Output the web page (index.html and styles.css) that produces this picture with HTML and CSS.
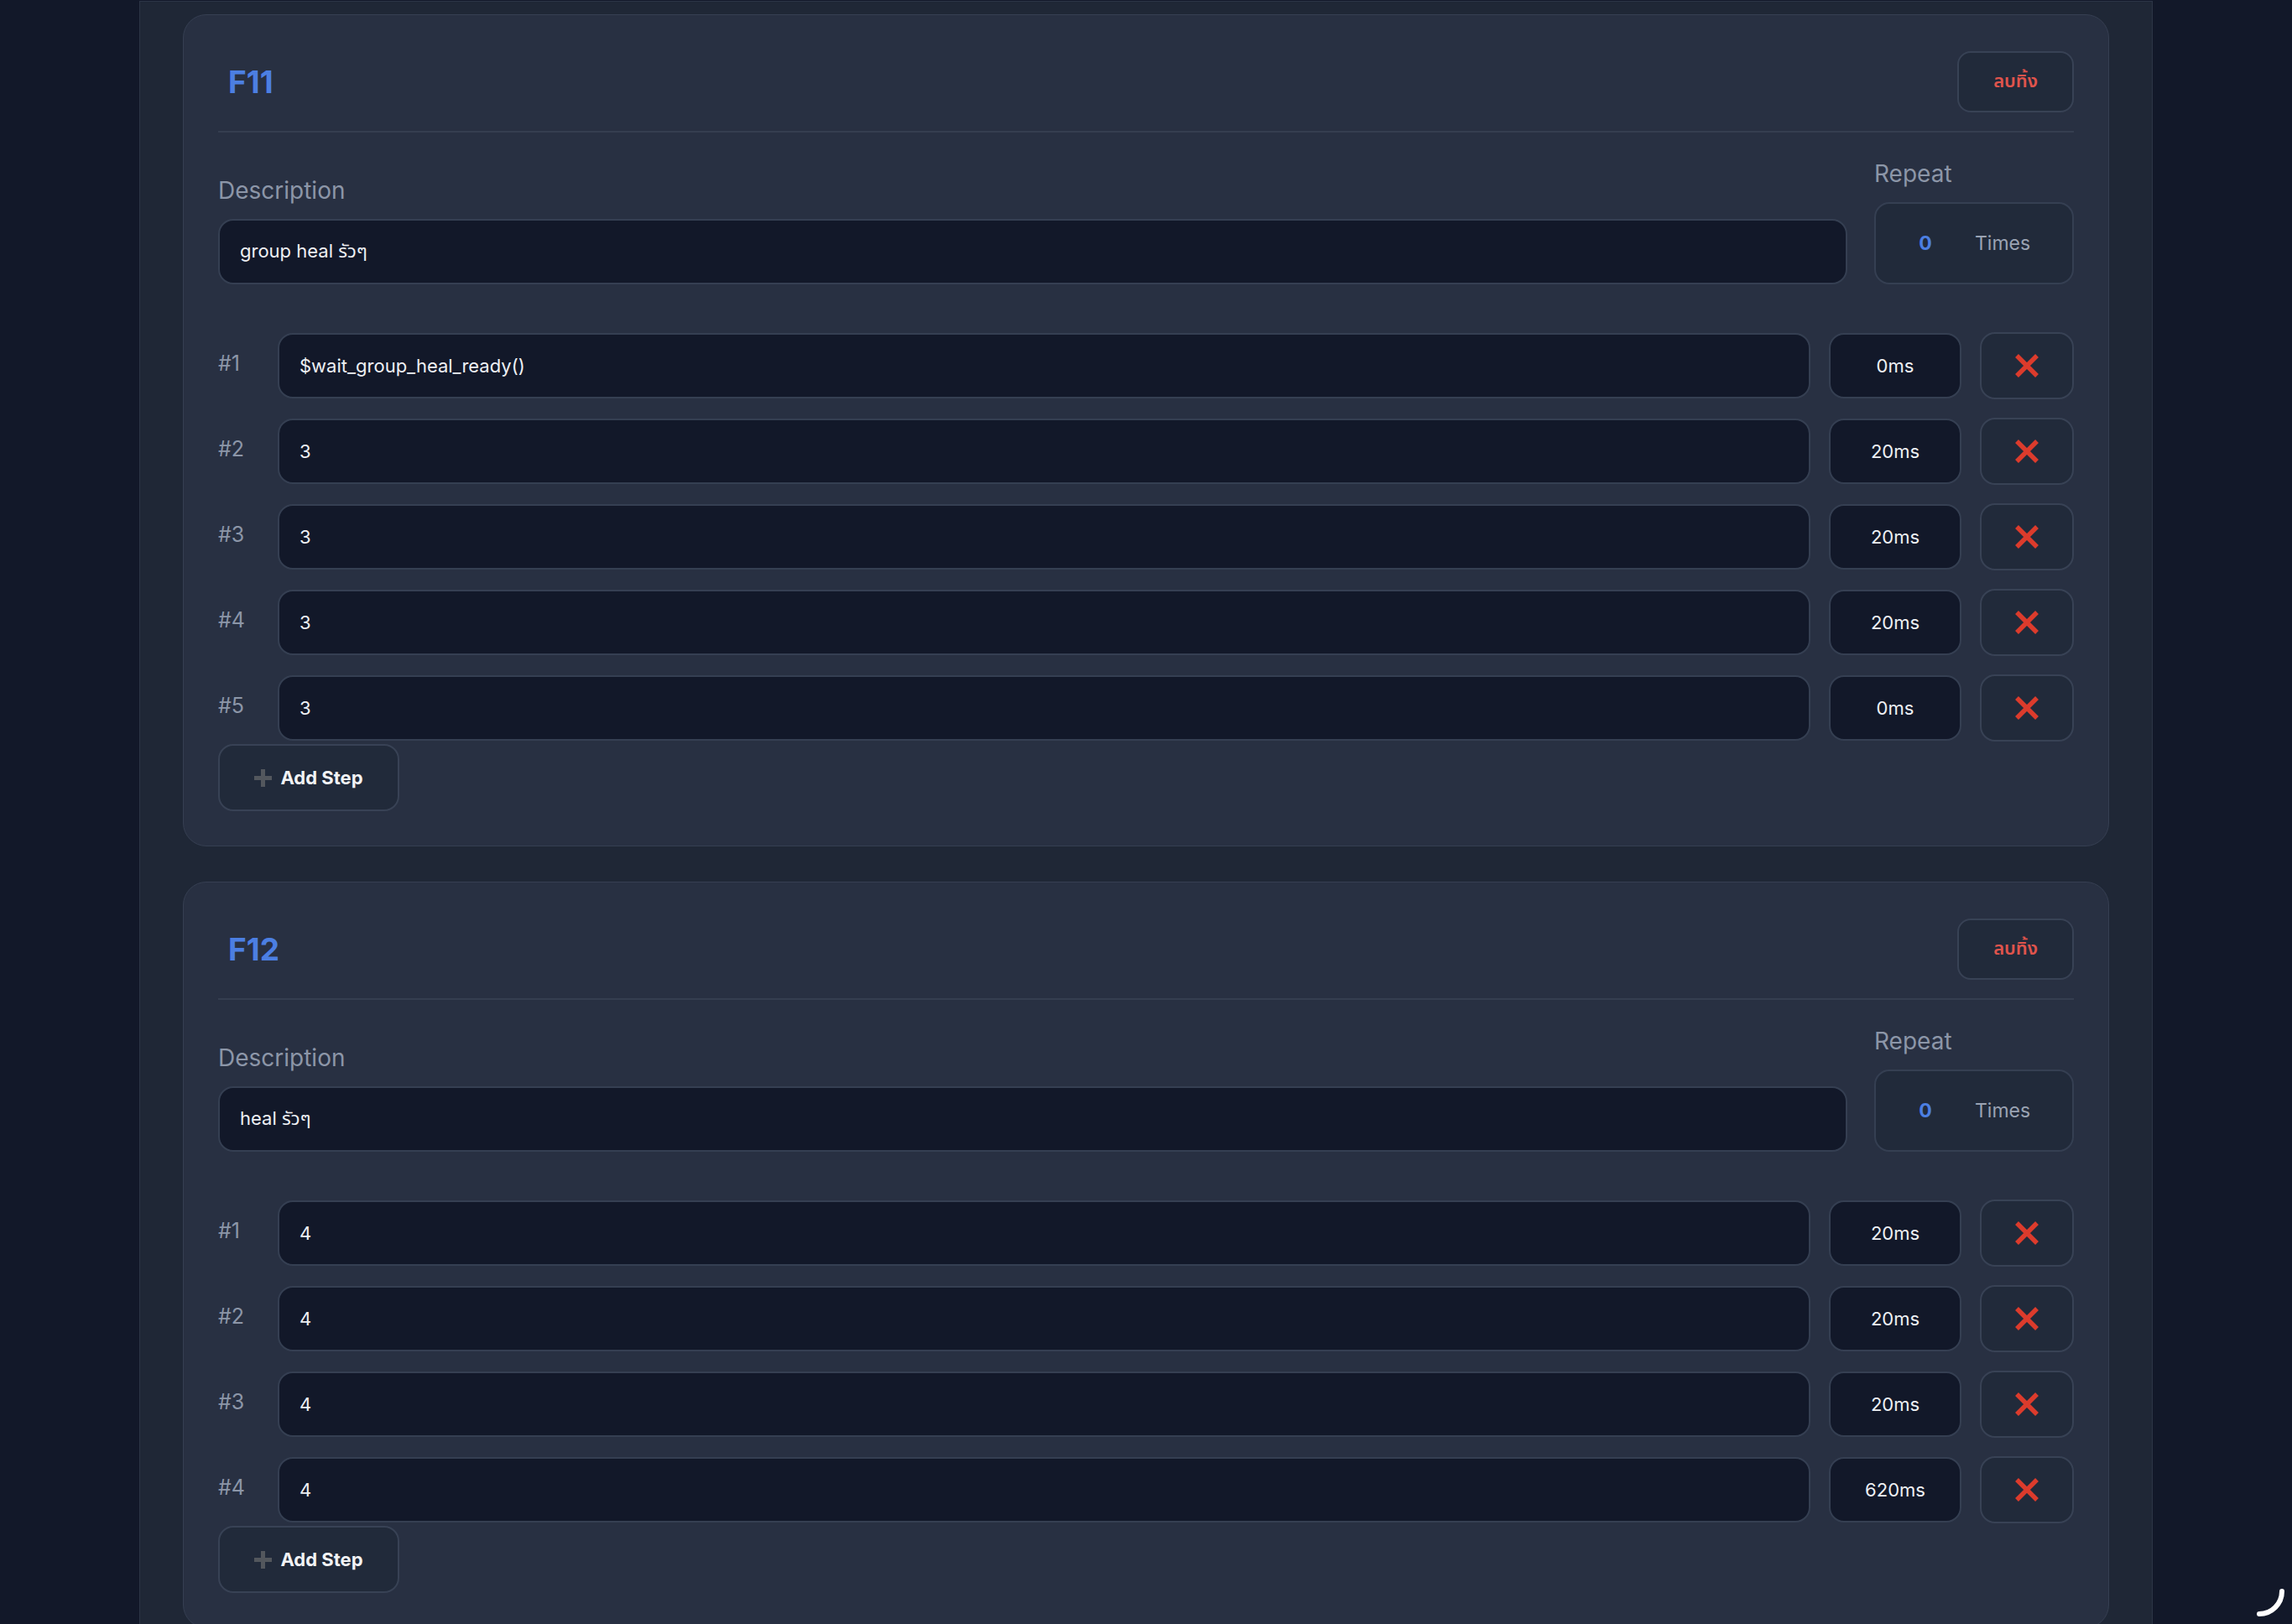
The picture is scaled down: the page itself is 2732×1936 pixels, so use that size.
FILE: index.html
```html
<!DOCTYPE html>
<html lang="th">
<head>
  <meta charset="UTF-8" />
  <title>Macro Editor</title>
  <meta name="viewport" content="width=device-width, initial-scale=1" />
  <link rel="stylesheet" href="styles.css">
</head>
<body>

<div class="wrap">

  <section class="macro">
    <div class="macro-head">
      <h2 class="macro-key">F11</h2>
      <button class="btn-remove">ลบทิ้ง</button>
    </div>
    <div class="meta">
      <div class="field desc">
        <label>Description</label>
        <input class="text-in" type="text" value="group heal รัวๆ">
      </div>
      <div class="field repeat">
        <label>Repeat</label>
        <div class="repeat-box">
          <input class="repeat-num" type="text" value="0">
          <span class="repeat-unit">Times</span>
        </div>
      </div>
    </div>
    <div class="steps">
      <div class="step">
        <span class="step-no">#1</span>
        <input class="text-in cmd" type="text" value="$wait_group_heal_ready()">
        <input class="text-in delay" type="text" value="0ms">
        <button class="btn-x"><svg width="28" height="28" viewBox="0 0 28 28"><path d="M2 2 L26 26 M26 2 L2 26" /></svg></button>
      </div>
      <div class="step">
        <span class="step-no">#2</span>
        <input class="text-in cmd" type="text" value="3">
        <input class="text-in delay" type="text" value="20ms">
        <button class="btn-x"><svg width="28" height="28" viewBox="0 0 28 28"><path d="M2 2 L26 26 M26 2 L2 26" /></svg></button>
      </div>
      <div class="step">
        <span class="step-no">#3</span>
        <input class="text-in cmd" type="text" value="3">
        <input class="text-in delay" type="text" value="20ms">
        <button class="btn-x"><svg width="28" height="28" viewBox="0 0 28 28"><path d="M2 2 L26 26 M26 2 L2 26" /></svg></button>
      </div>
      <div class="step">
        <span class="step-no">#4</span>
        <input class="text-in cmd" type="text" value="3">
        <input class="text-in delay" type="text" value="20ms">
        <button class="btn-x"><svg width="28" height="28" viewBox="0 0 28 28"><path d="M2 2 L26 26 M26 2 L2 26" /></svg></button>
      </div>
      <div class="step">
        <span class="step-no">#5</span>
        <input class="text-in cmd" type="text" value="3">
        <input class="text-in delay" type="text" value="0ms">
        <button class="btn-x"><svg width="28" height="28" viewBox="0 0 28 28"><path d="M2 2 L26 26 M26 2 L2 26" /></svg></button>
      </div>
    </div>
    <button class="btn-add"><svg width="21" height="21" viewBox="0 0 21 21"><path d="M10.5 0 V21 M0 10.5 H21" /></svg>Add Step</button>
  </section>

  <section class="macro">
    <div class="macro-head">
      <h2 class="macro-key">F12</h2>
      <button class="btn-remove">ลบทิ้ง</button>
    </div>
    <div class="meta">
      <div class="field desc">
        <label>Description</label>
        <input class="text-in" type="text" value="heal รัวๆ">
      </div>
      <div class="field repeat">
        <label>Repeat</label>
        <div class="repeat-box">
          <input class="repeat-num" type="text" value="0">
          <span class="repeat-unit">Times</span>
        </div>
      </div>
    </div>
    <div class="steps">
      <div class="step">
        <span class="step-no">#1</span>
        <input class="text-in cmd" type="text" value="4">
        <input class="text-in delay" type="text" value="20ms">
        <button class="btn-x"><svg width="28" height="28" viewBox="0 0 28 28"><path d="M2 2 L26 26 M26 2 L2 26" /></svg></button>
      </div>
      <div class="step">
        <span class="step-no">#2</span>
        <input class="text-in cmd" type="text" value="4">
        <input class="text-in delay" type="text" value="20ms">
        <button class="btn-x"><svg width="28" height="28" viewBox="0 0 28 28"><path d="M2 2 L26 26 M26 2 L2 26" /></svg></button>
      </div>
      <div class="step">
        <span class="step-no">#3</span>
        <input class="text-in cmd" type="text" value="4">
        <input class="text-in delay" type="text" value="20ms">
        <button class="btn-x"><svg width="28" height="28" viewBox="0 0 28 28"><path d="M2 2 L26 26 M26 2 L2 26" /></svg></button>
      </div>
      <div class="step">
        <span class="step-no">#4</span>
        <input class="text-in cmd" type="text" value="4">
        <input class="text-in delay" type="text" value="620ms">
        <button class="btn-x"><svg width="28" height="28" viewBox="0 0 28 28"><path d="M2 2 L26 26 M26 2 L2 26" /></svg></button>
      </div>
    </div>
    <button class="btn-add"><svg width="21" height="21" viewBox="0 0 21 21"><path d="M10.5 0 V21 M0 10.5 H21" /></svg>Add Step</button>
  </section>

</div>

<svg class="spinner" width="70" height="70" viewBox="0 0 70 70"><path d="M62 35 A27 27 0 0 1 35 62" /></svg>

</body>
</html>
```

FILE: styles.css
```css
* {
  box-sizing: border-box;
}

body {
  margin: 0;
  background: #121829;
  font-family: Inter, "Noto Sans Thai", "Noto Sans", sans-serif;
  color: #e8eaef;
  overflow: hidden;
}

.wrap {
  width: 2400px;
  min-height: 1960px;
  margin: 1px auto 0;
  padding: 15px 51px 40px;
  background: #1f2736;
  border: 1px solid #2c3546;
  display: flex;
  flex-direction: column;
  gap: 42px;
}

.macro {
  background: #283042;
  border: 1px solid #363f52;
  border-radius: 28px;
  padding: 43px 41px 41px;
}

.macro-head {
  display: flex;
  justify-content: space-between;
  align-items: center;
  padding-bottom: 22px;
  border-bottom: 2px solid #353e50;
}

.macro-key {
  margin: 0;
  padding-left: 12px;
  font-size: 37px;
  line-height: 44px;
  font-weight: 700;
  color: #4c7fe2;
}

.btn-remove {
  height: 73px;
  padding: 0 41px;
  background: #212a3a;
  border: 2px solid #384255;
  border-radius: 16px;
  color: #e0544c;
  font-family: inherit;
  font-size: 22px;
  font-weight: 600;
  cursor: pointer;
}

.meta {
  display: flex;
  align-items: flex-end;
  gap: 32px;
  margin-top: 32px;
}

.field label {
  display: block;
  font-size: 28px;
  line-height: 34px;
  color: #8c96a8;
  margin-bottom: 17px;
}

.desc {
  flex: 1;
}

.text-in {
  width: 100%;
  height: 78px;
  background: #121829;
  border: 2px solid #353f52;
  border-radius: 18px;
  padding: 0 24px;
  color: #eef0f4;
  font-family: inherit;
  font-size: 22px;
  outline: none;
}

.repeat {
  width: 238px;
}

.repeat-box {
  display: flex;
  align-items: center;
  height: 98px;
  background: #212a3a;
  border: 2px solid #353f52;
  border-radius: 18px;
}

.repeat-num {
  width: 118px;
  background: transparent;
  border: 0;
  outline: none;
  text-align: center;
  color: #4c7fe2;
  font-family: inherit;
  font-size: 23px;
  font-weight: 700;
}

.repeat-unit {
  color: #9aa3b3;
  font-size: 23px;
}

.steps {
  margin-top: 57px;
  display: flex;
  flex-direction: column;
  gap: 22px;
}

.step {
  display: flex;
  align-items: center;
  gap: 22px;
}

.step-no {
  width: 49px;
  flex: none;
  font-size: 25px;
  color: #8c96a8;
  padding-bottom: 6px;
}

.step .cmd {
  flex: 1;
  width: auto;
  min-width: 0;
}

.step .delay {
  width: 158px;
  flex: none;
  padding: 0;
  text-align: center;
}

.btn-x {
  width: 112px;
  height: 80px;
  flex: none;
  display: flex;
  align-items: center;
  justify-content: center;
  background: #212a3a;
  border: 2px solid #384255;
  border-radius: 18px;
  cursor: pointer;
}

.btn-x path {
  stroke: #dc3b2c;
  stroke-width: 5.5;
  fill: none;
}

.btn-add {
  margin-top: 3px;
  width: 216px;
  height: 80px;
  display: flex;
  align-items: center;
  justify-content: center;
  gap: 10px;
  background: #212a3a;
  border: 2px solid #384255;
  border-radius: 18px;
  color: #f2f3f5;
  font-family: inherit;
  font-size: 22px;
  font-weight: 700;
  cursor: pointer;
}

.btn-add path {
  stroke: #53575d;
  stroke-width: 5;
  fill: none;
}

.spinner {
  position: fixed;
  right: 4px;
  bottom: 4px;
}

.spinner path {
  stroke: #ffffff;
  stroke-width: 6;
  stroke-linecap: round;
  fill: none;
}
```
